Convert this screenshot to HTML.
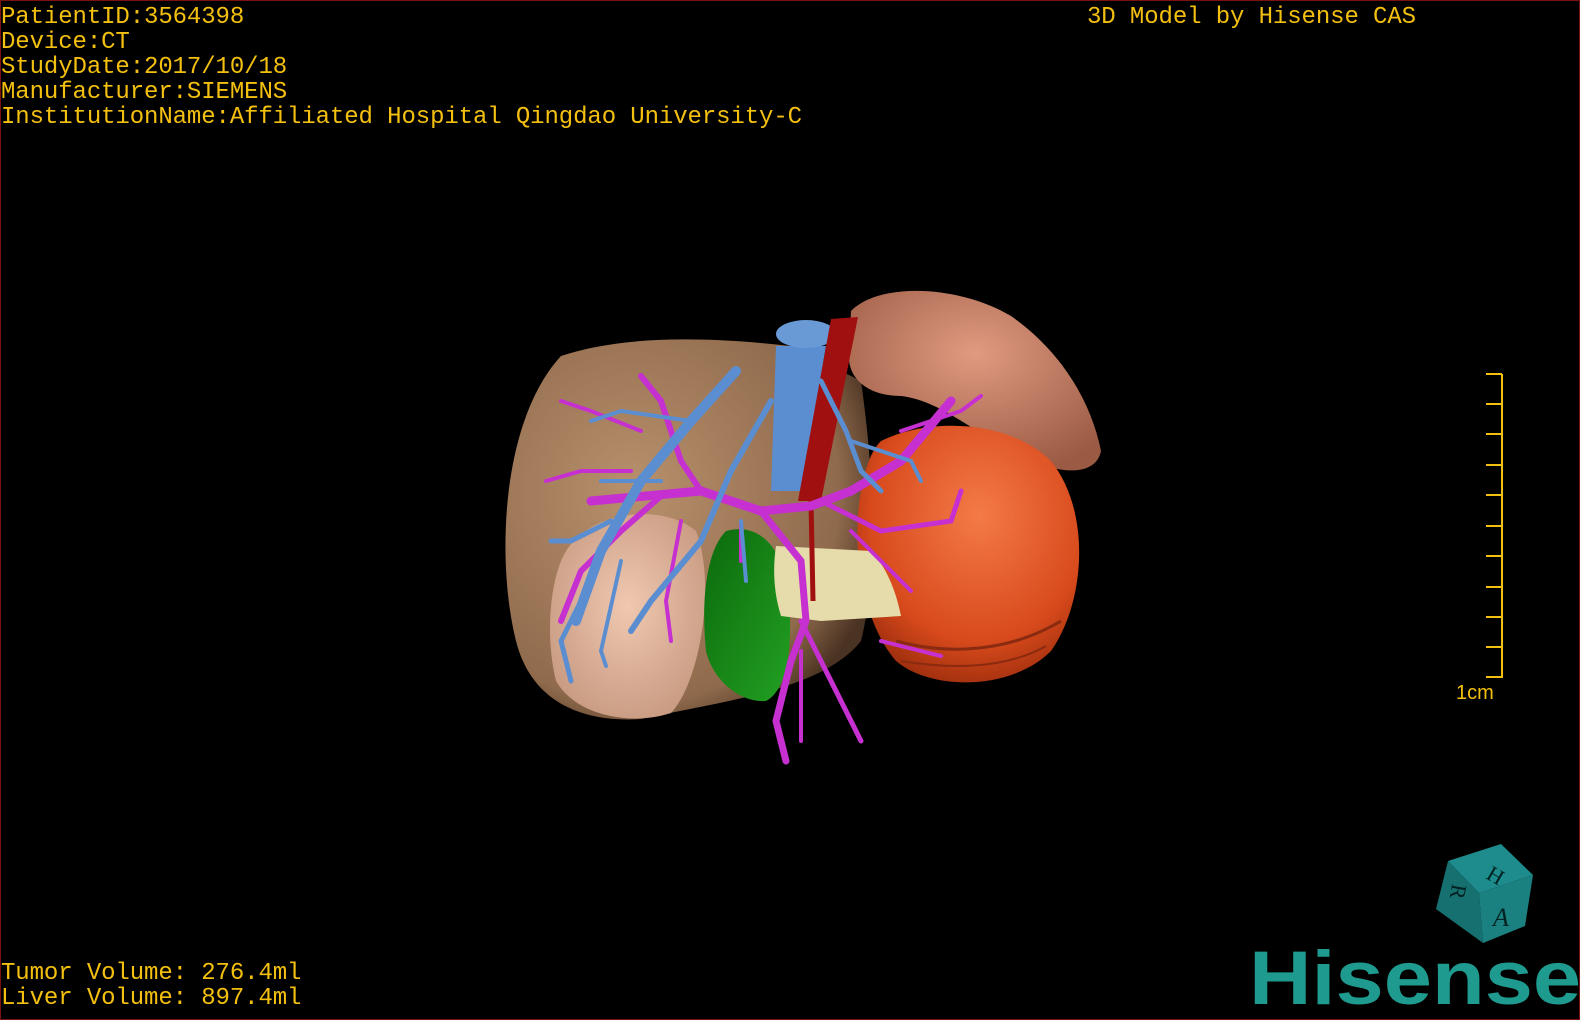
<!DOCTYPE html>
<html><head><meta charset="utf-8"><style>
html,body{margin:0;padding:0;background:#000;}
#f{position:relative;width:1580px;height:1020px;background:#000;overflow:hidden;box-sizing:border-box;border:1px solid #7a1010;}
.t{position:absolute;color:#f4c010;font-family:"Liberation Mono",monospace;font-size:24px;line-height:25px;letter-spacing:-0.1px;white-space:pre;}
svg{position:absolute;left:0;top:0;}
</style></head><body><div id="f">
<svg width="1580" height="1020" viewBox="0 0 1580 1020">
<defs>
<radialGradient id="lv" cx="0.35" cy="0.4" r="0.7"><stop offset="0" stop-color="#b8906c"/><stop offset="0.8" stop-color="#8f6a4c"/><stop offset="1" stop-color="#4a3322"/></radialGradient>
<radialGradient id="pk" cx="0.5" cy="0.45" r="0.6"><stop offset="0" stop-color="#f0c8b0"/><stop offset="1" stop-color="#c89a82"/></radialGradient>
<radialGradient id="st" cx="0.5" cy="0.35" r="0.7"><stop offset="0" stop-color="#e09a80"/><stop offset="1" stop-color="#9a5a44"/></radialGradient>
<radialGradient id="tu" cx="0.55" cy="0.35" r="0.7"><stop offset="0" stop-color="#f47a48"/><stop offset="0.7" stop-color="#d84a1c"/><stop offset="1" stop-color="#9a2c0c"/></radialGradient>
<linearGradient id="gb" x1="0" y1="0" x2="1" y2="1"><stop offset="0" stop-color="#0c6a0c"/><stop offset="1" stop-color="#22a022"/></linearGradient>
</defs>
<path d="M560,355 C620,335 700,335 790,345 L860,380 C870,450 880,560 860,640 C820,690 720,700 640,718 C580,722 530,700 515,640 C495,560 500,420 560,355Z" fill="url(#lv)"/>
<path d="M560,560 C580,510 660,500 695,530 C715,580 700,680 670,712 C630,725 575,715 555,680 C545,640 548,590 560,560Z" fill="url(#pk)"/>
<path d="M850,310 C880,280 960,285 1010,315 C1060,350 1090,400 1100,450 C1095,475 1060,475 1020,455 C970,430 940,400 900,395 C870,395 845,380 848,350Z" fill="url(#st)"/>
<path d="M880,440 C930,415 1010,420 1050,460 C1090,510 1085,600 1050,650 C1010,690 930,690 895,660 C860,620 850,540 860,490 C865,465 870,450 880,440Z" fill="url(#tu)"/>
<path d="M895,640 C950,655 1010,650 1060,620" stroke="#8a2a10" stroke-width="3" fill="none"/>
<path d="M900,660 C960,670 1010,665 1045,645" stroke="#8a2a10" stroke-width="2" fill="none"/>
<path d="M725,530 C760,520 785,550 788,600 C792,650 785,690 765,700 C740,702 712,680 705,650 C700,600 705,550 725,530Z" fill="url(#gb)"/>
<path d="M775,545 L870,550 C885,565 895,590 900,615 L820,620 L780,615 C772,590 772,565 775,545Z" fill="#e6dbaa"/>
<path d="M775,345 L825,345 L800,490 L770,490 Z" fill="#5b8ed0"/>
<ellipse cx="805" cy="333" rx="30" ry="14" fill="#6a9ad6"/>
<path d="M830,318 L857,316 L820,500 L797,500 Z" fill="#a01010"/>
<path d="M810,500 L812,600" stroke="#a01010" stroke-width="5"/>
<g stroke="#c630d0" fill="none" stroke-linecap="round">
<path d="M590,500 L700,490 L760,510 L810,505 L850,490 L900,460 L950,400" stroke-width="9"/>
<path d="M700,490 L680,460 L660,400 L640,375" stroke-width="6"/>
<path d="M660,495 L620,530 L580,570 L560,620" stroke-width="6"/>
<path d="M760,510 L800,560 L805,620 L790,660 L775,720 L785,760" stroke-width="7"/>
<path d="M800,620 L830,680 L860,740" stroke-width="5"/>
<path d="M820,500 L880,530 L950,520 L960,490" stroke-width="5"/>
<path d="M850,530 L910,590" stroke-width="4"/>
<path d="M640,430 L590,410 L560,400" stroke-width="4"/>
<path d="M680,520 L665,600 L670,640" stroke-width="4"/>
<path d="M630,470 L580,470 L545,480" stroke-width="4"/>
<path d="M740,520 L740,560" stroke-width="4"/>
<path d="M900,430 L960,410 L980,395" stroke-width="4"/>
<path d="M800,650 L800,740" stroke-width="4"/>
<path d="M880,640 L940,655" stroke-width="4"/>
</g>
<g stroke="#5b8ed0" fill="none" stroke-linecap="round">
<path d="M735,370 L690,420 L640,480 L600,550 L575,620" stroke-width="10"/>
<path d="M770,400 L730,470 L700,540 L650,600 L630,630" stroke-width="6"/>
<path d="M610,520 L570,540 L550,540" stroke-width="5"/>
<path d="M580,600 L560,640 L570,680" stroke-width="5"/>
<path d="M620,560 L600,650 L605,665" stroke-width="4"/>
<path d="M690,420 L620,410 L590,420" stroke-width="4"/>
<path d="M820,380 L845,430 L860,470 L880,490" stroke-width="5"/>
<path d="M850,440 L910,460 L920,480" stroke-width="4"/>
<path d="M740,520 L745,580" stroke-width="4"/>
<path d="M660,480 L600,480" stroke-width="4"/>
</g>
</svg>
<div class="t" style="left:0;top:4px;">PatientID:3564398
Device:CT
StudyDate:2017/10/18
Manufacturer:SIEMENS
InstitutionName:Affiliated Hospital Qingdao University-C</div>
<div class="t" style="left:1086px;top:4px;">3D Model by Hisense CAS</div>
<div class="t" style="left:0;top:960px;">Tumor Volume: 276.4ml
Liver Volume: 897.4ml</div>
<svg width="1580" height="1020">
<g stroke="#f4c010" stroke-width="2">
<line x1="1501" y1="373" x2="1501" y2="677"/>
<line x1="1485" y1="373" x2="1501" y2="373"/><line x1="1485" y1="403" x2="1501" y2="403"/><line x1="1485" y1="433" x2="1501" y2="433"/><line x1="1485" y1="464" x2="1501" y2="464"/><line x1="1485" y1="494" x2="1501" y2="494"/><line x1="1485" y1="525" x2="1501" y2="525"/><line x1="1485" y1="555" x2="1501" y2="555"/><line x1="1485" y1="586" x2="1501" y2="586"/><line x1="1485" y1="616" x2="1501" y2="616"/><line x1="1485" y1="646" x2="1501" y2="646"/><line x1="1485" y1="676" x2="1501" y2="676"/>
</g>
<text x="1455" y="698" fill="#f4c010" font-family="Liberation Sans,sans-serif" font-size="20">1cm</text>
<polygon points="1447,860 1500,843 1532,874 1478,892" fill="#1e8c8c"/>
<polygon points="1447,860 1478,892 1482,942 1435,908" fill="#167070"/>
<polygon points="1478,892 1532,874 1524,925 1482,942" fill="#1a8080"/>
<text x="1488" y="878" fill="#022" font-family="Liberation Serif,serif" font-size="22" transform="rotate(30 1488 870)">H</text>
<text x="1448" y="895" fill="#022" font-family="Liberation Serif,serif" font-size="22" transform="rotate(100 1455 890)">R</text>
<text x="1492" y="925" fill="#022" font-family="Liberation Serif,serif" font-size="26" font-style="italic">A</text>
<text x="1248" y="1003" fill="#1e9a8e" font-family="Liberation Sans,sans-serif" font-weight="bold" font-size="76" textLength="332" lengthAdjust="spacingAndGlyphs">Hisense</text>
</svg>
</div></body></html>
